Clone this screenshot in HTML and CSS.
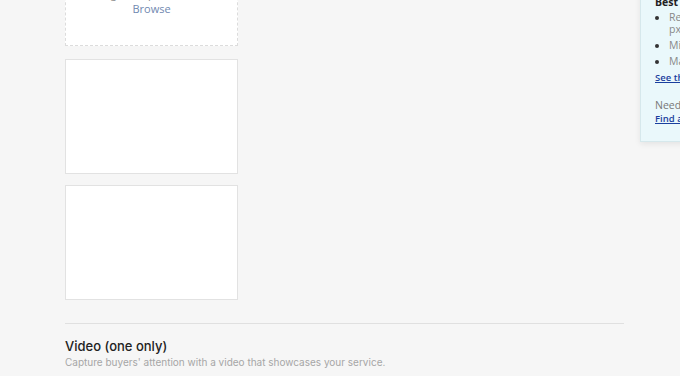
FILE: index.html
```html
<html>
<head>
	<title>Gallery</title>
	<link rel="stylesheet" href="styles.css">
</head>
<body>
	<div class='page'>
		<section class='gallery'>
			<div class='slot drop'>
				<span class='hint'>Drag &amp; drop a Photo or</span>
				<span class='browse'>Browse</span>
			</div>
			<div class='slot'></div>
			<div class='slot'></div>
			<hr class='divider'>
			<h3 class='title'>Video (one only)</h3>
			<p class='sub'>Capture buyers' attention with a video that showcases your service.</p>
		</section>
		<aside class='tips'>
			<h4>Best practices for images</h4>
			<ul>
				<li>Recommended size 1280x769 px.</li>
				<li>Minimum 712x430 px.</li>
				<li>Max file size 5MB.</li>
			</ul>
			<a href='#'>See the guidelines</a>
			<p>Need help?</p>
			<a href='#'>Find a freelancer</a>
		</aside>
	</div>
</body>
</html>
```

FILE: styles.css
```css
* {font-family: "Open Sans", "Liberation Sans", sans-serif; box-sizing: border-box;}
body {margin: 0; background-color: #f6f6f6; overflow: hidden;}
.page {display: flex; align-items: flex-start; margin-top: -69px; padding-left: 65px;}
.gallery {width: 559px; flex-shrink: 0;}

.slot {
	width: 173px;
	height: 115px;
	background-color: white;
	border: 1px solid #e2e2e2;
	margin-bottom: 11px;
}

.drop {
	border: 1px dashed #dcdcdc;
	display: flex;
	flex-direction: column;
	align-items: center;
	justify-content: flex-end;
	padding-bottom: 29px;
	margin-bottom: 13px;
}

.hint {font-size: 11px; color: #888; line-height: 14px;}
.browse {font-size: 11px; color: #6f88b0; line-height: 14px; margin-top: 1px;}

.divider {border: 0; border-top: 1px solid #e0e0e0; margin: 23px 0 0 0;}

.title {font-family: Inter, sans-serif; font-size: 13px; font-weight: 500; color: #222; margin: 14px 0 0 0; line-height: 16px;}
.sub {font-family: Inter, sans-serif; font-size: 10px; color: #a6a6a6; margin: 2px 0 0 0; line-height: 13px;}

.tips {
	margin-left: 16px;
	width: 190px;
	flex-shrink: 0;
	background-color: #eaf8fb;
	border: 1px solid #d6e8ec;
	box-shadow: 0 2px 6px rgba(0,0,0,0.08);
	padding: 63px 10px 16px 14px;
	font-size: 10.5px;
	color: #777;
}

.tips h4 {font-size: 10.5px; color: #222; margin: 0; line-height: 14px; font-weight: 700;}
.tips ul {margin: 2px 0 0 0; padding-left: 14px;}
.tips li {line-height: 12px; margin-bottom: 4px; color: #888;}
.tips li::marker {color: #333;}
.tips a {display: block; color: #1a3f9e; font-weight: 600; font-size: 9.5px; line-height: 12px; margin-top: 5px;}
.tips p {margin: 14px 0 1px 0; line-height: 14px;}
.tips p + a {margin-top: 0;}
```
